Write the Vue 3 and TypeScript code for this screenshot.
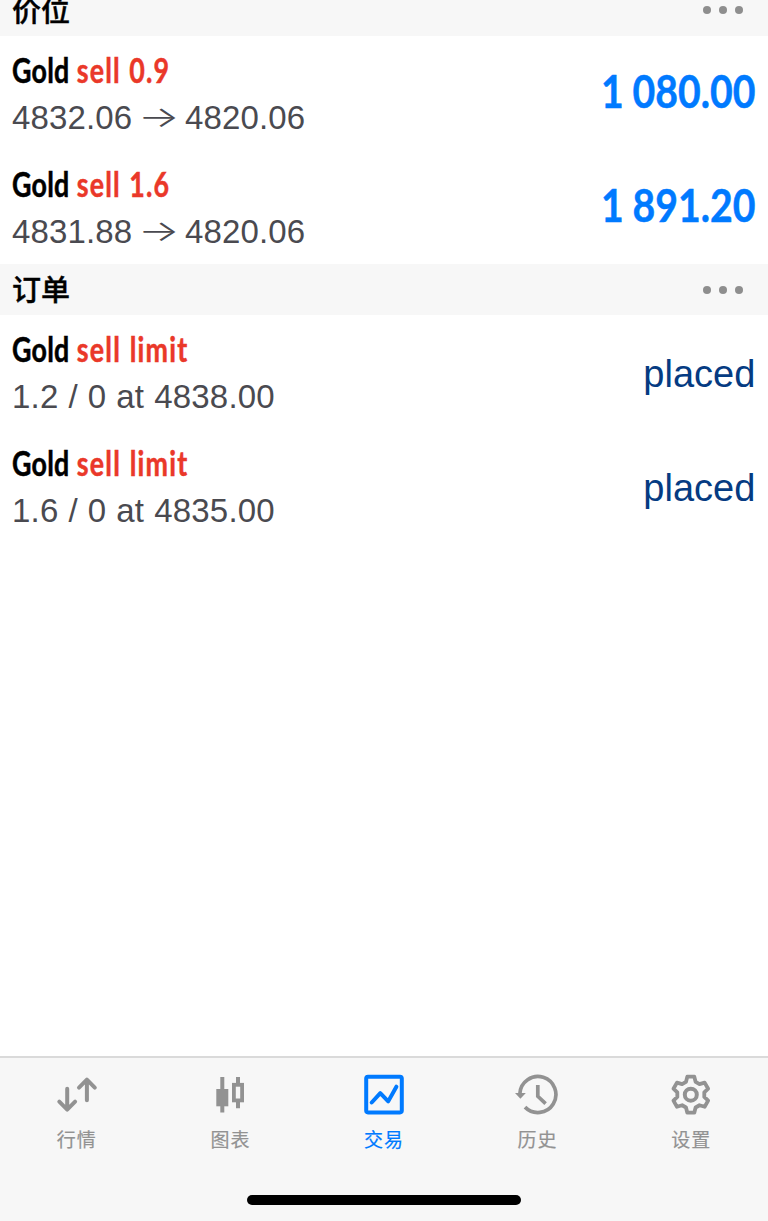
<script setup lang="ts">
interface Position {
  symbol: string
  side: string
  open: string
  current: string
  profit: string
}
interface Order {
  symbol: string
  side: string
  detail: string
  state: string
}

const positions: Position[] = [
  { symbol: 'Gold', side: 'sell 0.9', open: '4832.06', current: '4820.06', profit: '1 080.00' },
  { symbol: 'Gold', side: 'sell 1.6', open: '4831.88', current: '4820.06', profit: '1 891.20' },
]
const orders: Order[] = [
  { symbol: 'Gold', side: 'sell limit', detail: '1.2 / 0 at 4838.00', state: 'placed' },
  { symbol: 'Gold', side: 'sell limit', detail: '1.6 / 0 at 4835.00', state: 'placed' },
]
const tabs = [
  { id: 'quotes', label: '行情' },
  { id: 'chart', label: '图表' },
  { id: 'trade', label: '交易' },
  { id: 'history', label: '历史' },
  { id: 'settings', label: '设置' },
]
const active = 'trade'
</script>

<template>
  <div class="screen">
    <main class="content">
      <header class="section first">
        <h2>价位</h2>
        <div class="more"><i></i><i></i><i></i></div>
      </header>
      <article v-for="(p, i) in positions" :key="'p' + i" class="row">
        <div class="info">
          <div class="title"><span class="symbol">{{ p.symbol }}</span> <span class="side">{{ p.side }}</span></div>
          <div class="detail">{{ p.open }}<span class="arrow">→</span>{{ p.current }}</div>
        </div>
        <div class="profit">{{ p.profit }}</div>
      </article>
      <header class="section">
        <h2>订单</h2>
        <div class="more"><i></i><i></i><i></i></div>
      </header>
      <article v-for="(o, i) in orders" :key="'o' + i" class="row">
        <div class="info">
          <div class="title"><span class="symbol">{{ o.symbol }}</span> <span class="side limit">{{ o.side }}</span></div>
          <div class="detail order">{{ o.detail }}</div>
        </div>
        <div class="state">{{ o.state }}</div>
      </article>
    </main>

    <nav class="tabbar">
      <div class="tabs">
        <a v-for="t in tabs" :key="t.id" class="tab" :class="{ active: t.id === active }">
          <svg width="48" height="44" viewBox="0 0 48 44" fill="none" stroke="currentColor">
            <g v-if="t.id === 'quotes'" stroke-width="4" stroke-linecap="round" stroke-linejoin="round">
              <path d="M14.200 15.700V36M6.300 28.700l7.900 7.900 7.900-7.900" />
              <path d="M33.900 27.300V7M26 14.600l7.900-7.900 7.900 7.900" />
            </g>
            <g v-else-if="t.id === 'chart'">
              <path d="M16.300 4v35.500M32 4v6M32 28v7.300" stroke-width="4" />
              <rect x="10.300" y="16" width="12" height="17.300" fill="currentColor" stroke="none" />
              <rect x="27.900" y="11.800" width="8.200" height="15.600" stroke-width="3.800" />
            </g>
            <g v-else-if="t.id === 'trade'" stroke-width="4">
              <rect x="6.200" y="3.800" width="35.600" height="35.600" rx="1.800" />
              <path d="M11.700 29.500l8.600-9.300 7.900 8.200 8.200-14.700" stroke-linecap="round" stroke-linejoin="round" />
            </g>
            <g v-else-if="t.id === 'history'">
              <path d="M5.900 20.500A18 18 0 1 1 11 34.100" stroke-width="3.700" />
              <path d="M1 20h10.800l-5.400 5.800z" fill="currentColor" stroke="none" />
              <path d="M23.800 12v11.300l7.800 7.300" stroke-width="3.700" />
            </g>
            <g v-else transform="translate(23.800 21.700)" stroke-width="3.800" stroke-linejoin="round">
              <path d="M-4.800-12.800L-3.500-18H3.500L4.800-12.800L8.680-10.560L13.840-12.030L17.340-5.970L13.480-2.240V2.240L17.340 5.970L13.840 12.030L8.680 10.560L4.800 12.800L3.500 18H-3.500L-4.800 12.800L-8.680 10.560L-13.840 12.030L-17.340 5.970L-13.480 2.240V-2.240L-17.340-5.970L-13.840-12.030L-8.680-10.560Z" />
              <circle r="6" stroke-width="4" />
            </g>
          </svg>
          <span>{{ t.label }}</span>
        </a>
      </div>
      <div class="home"></div>
    </nav>
  </div>
</template>

<style>
body {
  margin: 0;
  background: #fff;
}
</style>

<style scoped>
.screen {
  width: 768px;
  height: 1221px;
  overflow: hidden;
  display: flex;
  flex-direction: column;
  background: #fff;
  font-family: "Liberation Sans", "Noto Sans CJK SC", sans-serif;
}
.content {
  flex: 1;
  min-height: 0;
}
.section {
  box-sizing: border-box;
  height: 51px;
  padding: 0 25.500px 0 12px;
  display: flex;
  align-items: center;
  justify-content: space-between;
  background: #f7f7f7;
}
.section.first {
  margin-top: -15.500px;
}
h2 {
  margin: 0;
  font: 500 29px/48px "Noto Sans CJK SC", sans-serif;
  height: 51px;
  color: #000;
  -webkit-text-stroke: 0.400px #000;
}
.more {
  display: flex;
  gap: 7.700px;
}
.more i {
  width: 8px;
  height: 8px;
  border-radius: 50%;
  background: #8e8e8e;
}
.row {
  box-sizing: border-box;
  height: 114.300px;
  padding: 11px 13px 0 12px;
  display: flex;
  justify-content: space-between;
}
.title {
  height: 47px;
  font: 700 33.500px/47px Lato, sans-serif;
  white-space: nowrap;
  transform: scaleX(0.8);
  transform-origin: left;
}
.symbol {
  color: #000;
  letter-spacing: 0.300px;
  margin-right: 1px;
  -webkit-text-stroke: 0.500px #000;
}
.side {
  color: #ea3829;
  letter-spacing: 1.400px;
  word-spacing: 1.200px;
  -webkit-text-stroke: 0.500px #ea3829;
}
.side.limit {
  letter-spacing: 1.500px;
}
.detail {
  font-size: 33px;
  line-height: 47.500px;
  letter-spacing: 0.150px;
  white-space: nowrap;
  color: #4a4a50;
}
.detail.order {
  letter-spacing: 0.200px;
  word-spacing: 0.600px;
}
.arrow {
  display: inline-block;
  width: 40px;
  text-align: center;
  font-family: Inter, sans-serif;
  font-weight: 300;
  line-height: 40px;
  transform: translateY(-1px) scale(1.32, 0.9);
  margin: 0 6.300px;
}
.profit {
  font: 700 45px/88px Lato, sans-serif;
  white-space: nowrap;
  color: #007aff;
  word-spacing: -0.800px;
  margin-right: -0.500px;
  transform: scaleX(0.87);
  transform-origin: right;
  -webkit-text-stroke: 0.500px #007aff;
}
.state {
  font-size: 38px;
  line-height: 97px;
  margin-right: -0.300px;
  color: #053b82;
}
.tabbar {
  box-sizing: border-box;
  height: 165px;
  border-top: 2px solid #dadada;
  background: #f7f7f7;
}
.tabs {
  display: flex;
  height: 137px;
}
.tab {
  flex: 1;
  display: flex;
  flex-direction: column;
  align-items: center;
  padding-top: 15px;
  color: #929292;
}
.tab svg {
  display: block;
}
.tab span {
  margin-top: 7px;
  font: 400 19px/30px "Noto Sans CJK SC", sans-serif;
  letter-spacing: 1px;
  -webkit-text-stroke: 0.200px currentColor;
}
.tab.active {
  color: #007aff;
}
.home {
  width: 274px;
  height: 10px;
  margin: 0 auto;
  border-radius: 5px;
  background: #000;
}
</style>
